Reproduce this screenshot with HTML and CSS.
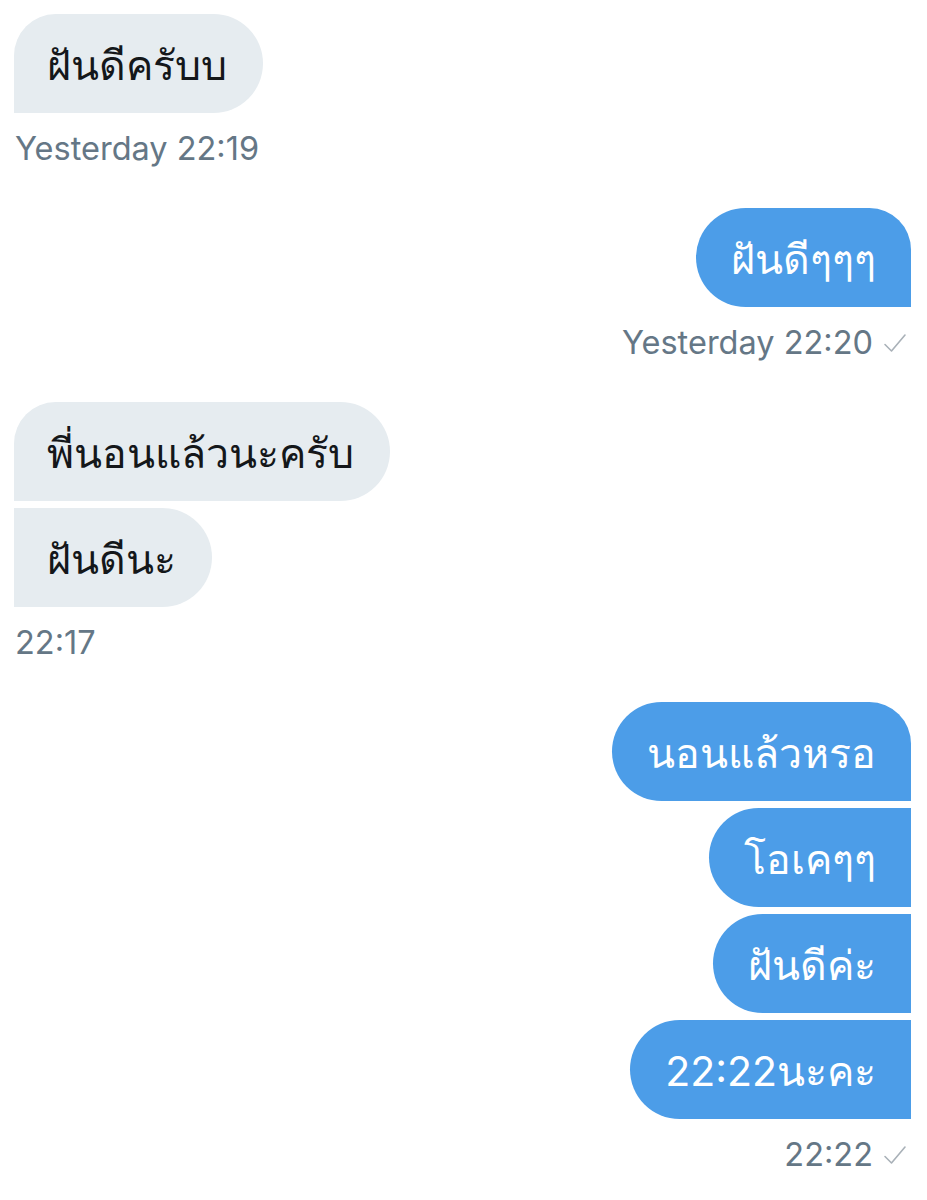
FILE: index.html
```html
<!DOCTYPE html>
<html lang="th">
<head>
<meta charset="utf-8">
<title>Messages</title>
<link rel="stylesheet" href="styles.css">
</head>
<body>
<div class="chat">
  <div class="group in">
    <div class="bubble first">ฝันดีครับบ</div>
    <div class="meta">Yesterday 22:19</div>
  </div>
  <div class="group out">
    <div class="bubble first">ฝันดีๆๆๆ</div>
    <div class="meta">Yesterday 22:20 <svg class="check" width="24" height="22" viewBox="0 0 24 22"><path d="M2 12.5 L8.5 19 L22 3" fill="none" stroke="#a9b1b8" stroke-width="1.6" stroke-linecap="round" stroke-linejoin="round"/></svg></div>
  </div>
  <div class="group in">
    <div class="bubble first">พี่นอนแล้วนะครับ</div>
    <div class="bubble">ฝันดีนะ</div>
    <div class="meta">22:17</div>
  </div>
  <div class="group out">
    <div class="bubble first">นอนแล้วหรอ</div>
    <div class="bubble">โอเคๆๆ</div>
    <div class="bubble">ฝันดีค่ะ</div>
    <div class="bubble">22:22นะคะ</div>
    <div class="meta">22:22 <svg class="check" width="24" height="22" viewBox="0 0 24 22"><path d="M2 12.5 L8.5 19 L22 3" fill="none" stroke="#a9b1b8" stroke-width="1.6" stroke-linecap="round" stroke-linejoin="round"/></svg></div>
  </div>
</div>
</body>
</html>
```

FILE: styles.css
```css
html, body {
  margin: 0;
  padding: 0;
  background: #ffffff;
}

body {
  font-family: "Inter", "Noto Sans", "DejaVu Sans", sans-serif;
  width: 927px;
}

.chat {
  display: flex;
  flex-direction: column;
  gap: 41px;
  padding: 14px 16px 0 14px;
}

.group {
  display: flex;
  flex-direction: column;
  gap: 7px;
}

.group.in {
  align-items: flex-start;
}

.group.out {
  align-items: flex-end;
}

.bubble {
  box-sizing: border-box;
  height: 99px;
  display: flex;
  align-items: center;
  padding: 4px 36px 0 33px;
  font-size: 41px;
  line-height: 1;
  white-space: nowrap;
}

.in .bubble {
  background: #e6ecf0;
  color: #14171a;
  border-radius: 0 50px 50px 0;
}

.in .bubble.first {
  border-radius: 42px 50px 50px 0;
}

.out .bubble {
  background: #4c9de8;
  color: #ffffff;
  border-radius: 50px 0 0 50px;
  padding: 4px 35px 0 35px;
}

.out .bubble.first {
  border-radius: 50px 42px 0 50px;
}

.meta {
  margin-top: 11px;
  font-size: 32.5px;
  line-height: 36px;
  color: #657786;
  display: flex;
  align-items: center;
  gap: 10px;
  padding-left: 1px;
}

.out .meta {
  padding-right: 4px;
  padding-left: 0;
}

.check {
  display: block;
}
```
